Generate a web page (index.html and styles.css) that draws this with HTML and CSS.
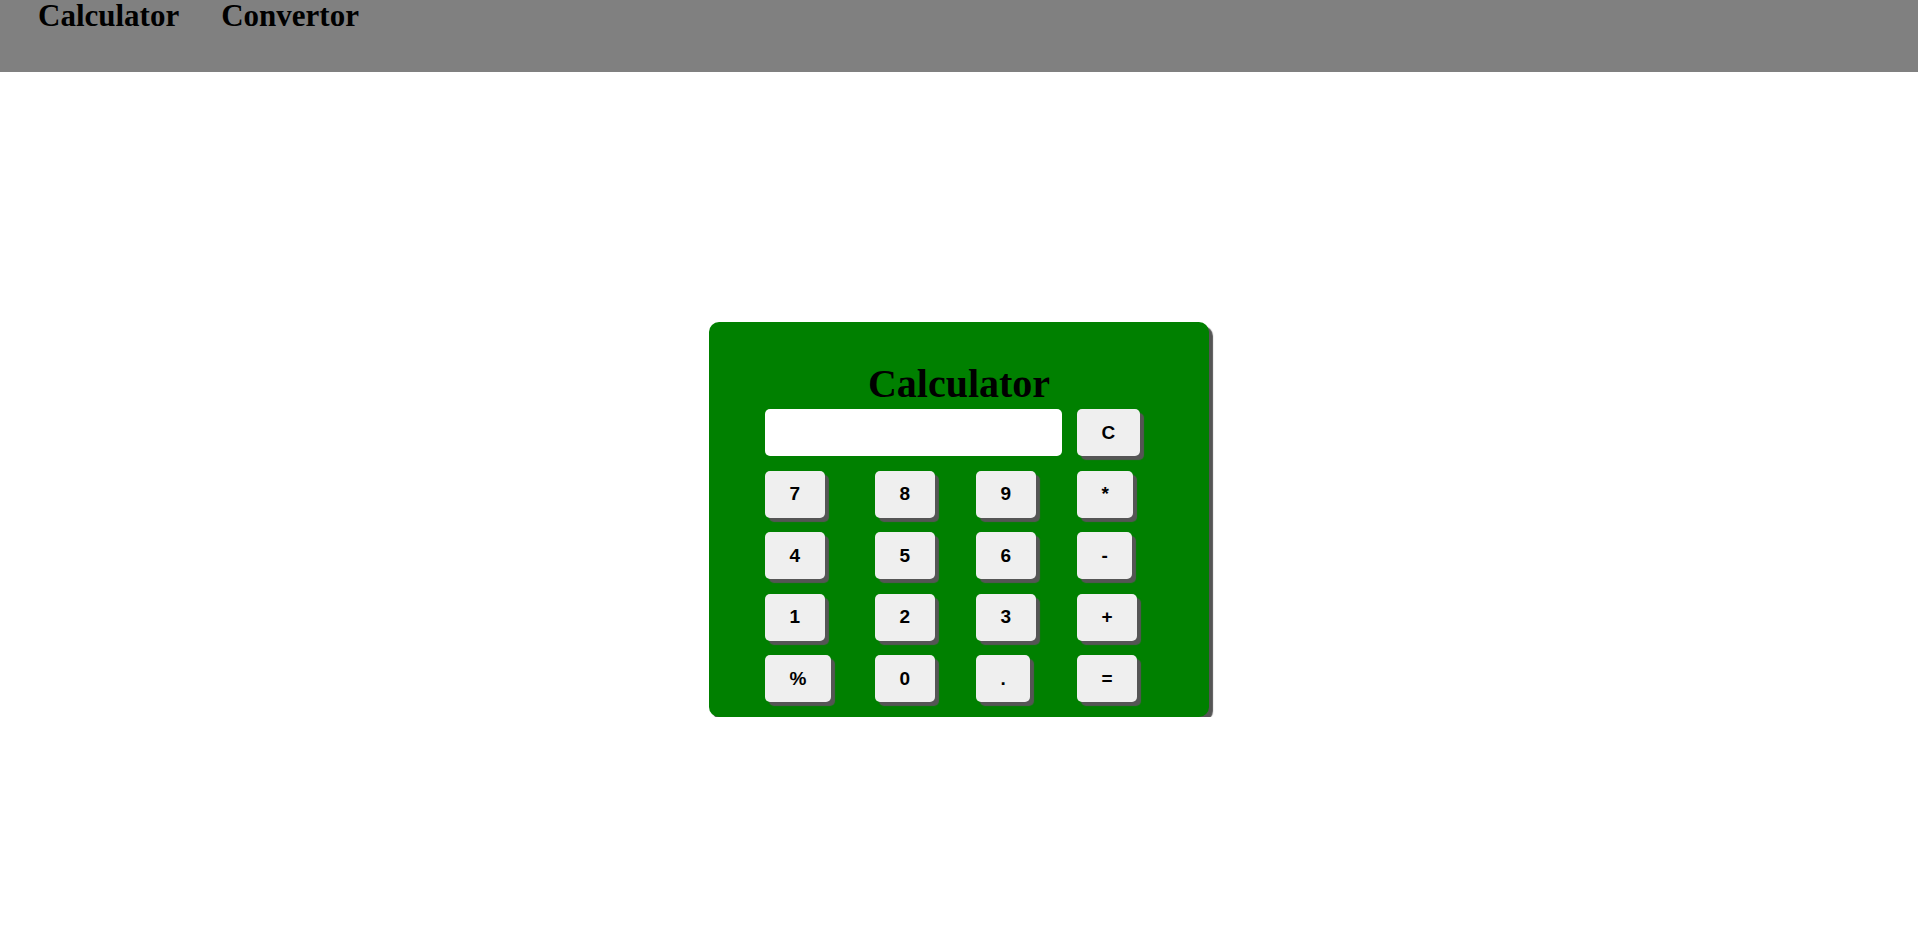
FILE: index.html
```html
<!DOCTYPE html>
<html>
<head>
<meta charset="utf-8">
<title>Calculator</title>
<link rel="stylesheet" href="styles.css">
</head>
<body>
<header class="topbar">
  <nav class="nav">
    <a class="nav-link" href="#">Calculator</a>
    <a class="nav-link" href="#">Convertor</a>
  </nav>
</header>
<main class="page">
  <section class="calc">
    <h1 class="calc-title">Calculator</h1>
    <div class="keys">
      <input class="display" type="text">
      <button class="key">C</button>
      <button class="key">7</button>
      <button class="key">8</button>
      <button class="key">9</button>
      <button class="key">*</button>
      <button class="key">4</button>
      <button class="key">5</button>
      <button class="key">6</button>
      <button class="key">-</button>
      <button class="key">1</button>
      <button class="key">2</button>
      <button class="key">3</button>
      <button class="key">+</button>
      <button class="key">%</button>
      <button class="key">0</button>
      <button class="key">.</button>
      <button class="key">=</button>
    </div>
  </section>
</main>
</body>
</html>
```

FILE: styles.css
```css
html, body {
  margin: 0;
  padding: 0;
  background: #ffffff;
  font-family: "Liberation Serif", "Times New Roman", serif;
}

.topbar {
  height: 72px;
  background: #808080;
}

.nav {
  display: flex;
  gap: 42px;
  padding-left: 38px;
}

.nav-link {
  color: #000;
  text-decoration: none;
  font-weight: bold;
  font-size: 31px;
  line-height: 1;
}

.page {
  display: flex;
  justify-content: center;
  padding-top: 250px;
}

.calc {
  width: 500px;
  box-sizing: border-box;
  background: #008000;
  border-radius: 10px;
  box-shadow: 4px 4px 1px #555555;
  padding: 40px 0 15px 56px;
}

.calc-title {
  margin: 0 0 3px -56px;
  text-align: center;
  font-size: 40px;
  font-weight: bold;
  line-height: 44px;
  color: #000;
}

.keys {
  display: grid;
  grid-template-columns: 95px 86px 86px 76px;
  grid-auto-rows: 47px;
  column-gap: 15px;
  row-gap: 14.5px;
  justify-items: start;
}

.display {
  grid-column: 1 / span 3;
  width: 297px;
  height: 47px;
  box-sizing: border-box;
  border: none;
  border-radius: 5px;
  background: #fff;
  padding: 0 8px;
  font-size: 18px;
}

.key {
  height: 47px;
  box-sizing: border-box;
  padding: 0 24.5px;
  border: none;
  border-radius: 5px;
  background: #efefef;
  box-shadow: 4px 4px 1px #555555;
  font-family: "Liberation Sans", Arial, sans-serif;
  font-weight: bold;
  font-size: 19px;
  color: #000;
}
```
